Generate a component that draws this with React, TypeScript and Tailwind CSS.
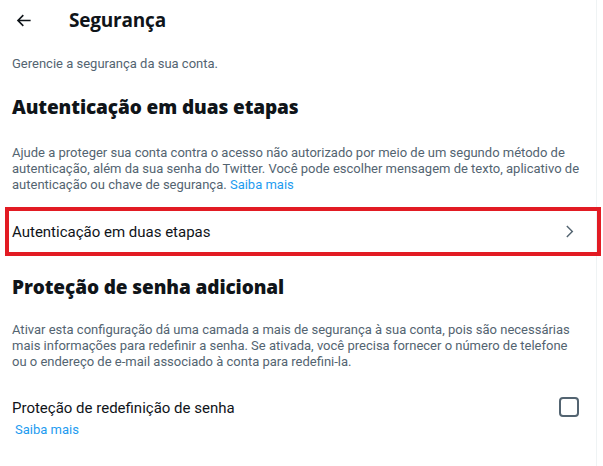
import React from "react";

const body = { fontFamily: 'Roboto, "Open Sans", sans-serif' };
const head = { fontFamily: '"Open Sans", Roboto, sans-serif' };

export default function App() {
  return (
    <div className="w-[603px] h-[466px] bg-white overflow-hidden" style={body}>
      <div className="w-[597px] h-full border-r border-[#eff3f4] flex flex-col">
        {/* Header */}
        <div className="h-[40px] flex items-center pl-[14px]">
          <svg viewBox="0 0 24 24" className="w-[19px] h-[19px]" fill="#0f1419">
            <path d="M7.414 13l5.043 5.04-1.414 1.42L3.586 12l7.457-7.46 1.414 1.42L7.414 11H21v2H7.414z" />
          </svg>
          <div className="ml-[36px] text-[19px] font-bold text-[#0f1419] tracking-[-0.2px]" style={head}>
            Segurança
          </div>
        </div>
        <div className="px-3 pt-[16px] text-[13px] text-[#536471] leading-[16px]">
          Gerencie a segurança da sua conta.
        </div>
        <div
          className="px-3 pt-[23px] text-[19px] font-extrabold text-[#0f1419] leading-[24px] tracking-[-0.1px]"
          style={head}
        >
          Autenticação em duas etapas
        </div>
        <div className="px-3 pt-[26px] text-[13px] text-[#536471] leading-[16px]">
          Ajude a proteger sua conta contra o acesso não autorizado por meio de um segundo método de
          autenticação, além da sua senha do Twitter. Você pode escolher mensagem de texto, aplicativo de
          autenticação ou chave de segurança. <span className="text-[#1d9bf0]">Saiba mais</span>
        </div>
        <div className="relative mt-[14px] h-[49px] flex items-center justify-between px-3">
          <span className="text-[15px] text-[#0f1419] leading-[20px]">Autenticação em duas etapas</span>
          <svg viewBox="0 0 24 24" className="w-[17px] h-[17px] mr-[6px]" fill="#536471">
            <path d="M14.586 12L7.543 4.96l1.414-1.42L17.414 12l-8.457 8.46-1.414-1.42L14.586 12z" />
          </svg>
          <div className="absolute left-[5px] top-0 w-[596px] h-[49px] border-[4px] border-[#e21b23] pointer-events-none" />
        </div>
        <div
          className="px-3 pt-[19px] text-[19px] font-extrabold text-[#0f1419] leading-[24px] tracking-[-0.1px]"
          style={head}
        >
          Proteção de senha adicional
        </div>
        <div className="pl-3 pr-[16px] pt-[23px] text-[13px] text-[#536471] leading-[16px]">
          Ativar esta configuração dá uma camada a mais de segurança à sua conta, pois são necessárias mais
          informações para redefinir a senha. Se ativada, você precisa fornecer o número de telefone ou o
          endereço de e-mail associado à conta para redefini-la.
        </div>
        <div className="flex items-start justify-between px-3 pt-[28px]">
          <div className="flex flex-col">
            <span className="text-[15px] text-[#0f1419] leading-[20px]">Proteção de redefinição de senha</span>
            <span className="mt-[4px] ml-[3px] text-[13px] text-[#1d9bf0] leading-[16px]">Saiba mais</span>
          </div>
          <div className="-mt-[1px] mr-[5px] w-[20px] h-[20px] rounded-[4px] border-2 border-[#536471]" />
        </div>
      </div>
    </div>
  );
}
